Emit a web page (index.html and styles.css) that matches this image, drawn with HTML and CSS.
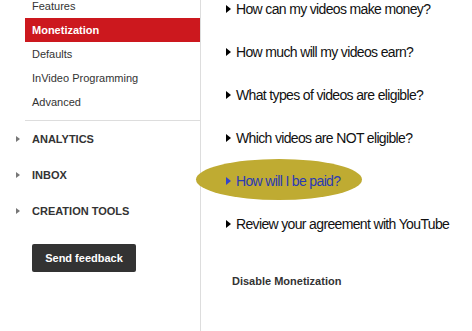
FILE: index.html
```html
<!DOCTYPE html>
<html lang="en">
<head>
  <meta charset="UTF-8">
  <title>Monetization</title>
  <link rel="stylesheet" href="styles.css">
</head>
<body>
  <div class="page">
    <aside class="sidebar">
      <ul class="sub-menu">
        <li>Features</li>
        <li class="active">Monetization</li>
        <li>Defaults</li>
        <li>InVideo Programming</li>
        <li>Advanced</li>
      </ul>
      <ul class="sections">
        <li>ANALYTICS</li>
        <li>INBOX</li>
        <li>CREATION TOOLS</li>
      </ul>
      <button class="feedback">Send feedback</button>
    </aside>

    <main class="content">
      <ul class="faq">
        <li>How can my videos make money?</li>
        <li>How much will my videos earn?</li>
        <li>What types of videos are eligible?</li>
        <li>Which videos are NOT eligible?</li>
        <li class="highlight">How will I be paid?</li>
        <li>Review your agreement with YouTube</li>
      </ul>
      <div class="disable">Disable Monetization</div>
    </main>

    <div class="marker"></div>
  </div>
</body>
</html>
```

FILE: styles.css
```css
body {
  margin: 0;
  font-family: "Liberation Sans", Arial, sans-serif;
  background: #fff;
  color: #333;
  overflow: hidden;
}
ul {
  list-style: none;
  margin: 0;
  padding: 0;
}
.page {
  display: flex;
  height: 331px;
  position: relative;
}
.sidebar {
  width: 200px;
  flex: none;
  border-right: 1px solid #ddd;
  font-size: 11px;
}
.sub-menu {
  margin: -6px 0 0 25px;
  padding-bottom: 6px;
  border-bottom: 1px solid #ddd;
}
.sub-menu li {
  height: 24px;
  line-height: 24px;
  padding-left: 7px;
}
.sub-menu li.active {
  background: #cc181e;
  color: #fff;
  font-weight: bold;
}
.sections li {
  height: 36px;
  line-height: 36px;
  padding-left: 32px;
  font-weight: bold;
  position: relative;
}
.sections li::before {
  content: "";
  position: absolute;
  left: 16px;
  top: 15px;
  border-left: 4px solid #777;
  border-top: 3px solid transparent;
  border-bottom: 3px solid transparent;
}
.feedback {
  margin: 15px 0 0 32px;
  width: 104px;
  height: 28px;
  background: #333;
  color: #fff;
  border: none;
  border-radius: 2px;
  font-family: inherit;
  font-size: 11px;
  font-weight: bold;
  padding: 0;
}
.content {
  padding-left: 24px;
}
.faq {
  margin-top: -12px;
}
.faq li {
  height: 43px;
  line-height: 43px;
  font-size: 14px;
  letter-spacing: -0.65px;
  color: #111;
  padding-left: 11px;
  position: relative;
  z-index: 1;
  white-space: nowrap;
}
.faq li::before {
  content: "";
  position: absolute;
  left: 1px;
  top: 17px;
  border-left: 5px solid #000;
  border-top: 4px solid transparent;
  border-bottom: 4px solid transparent;
}
.faq li.highlight {
  color: #2b3ab4;
}
.faq li.highlight::before {
  border-left-color: #3344cc;
}
.disable {
  margin: 28px 0 0 7px;
  font-size: 11px;
  line-height: 14px;
  font-weight: bold;
}
.marker {
  position: absolute;
  left: 196px;
  top: 159px;
  width: 166px;
  height: 41px;
  border-radius: 50%;
  background: #bfab32;
}
```
